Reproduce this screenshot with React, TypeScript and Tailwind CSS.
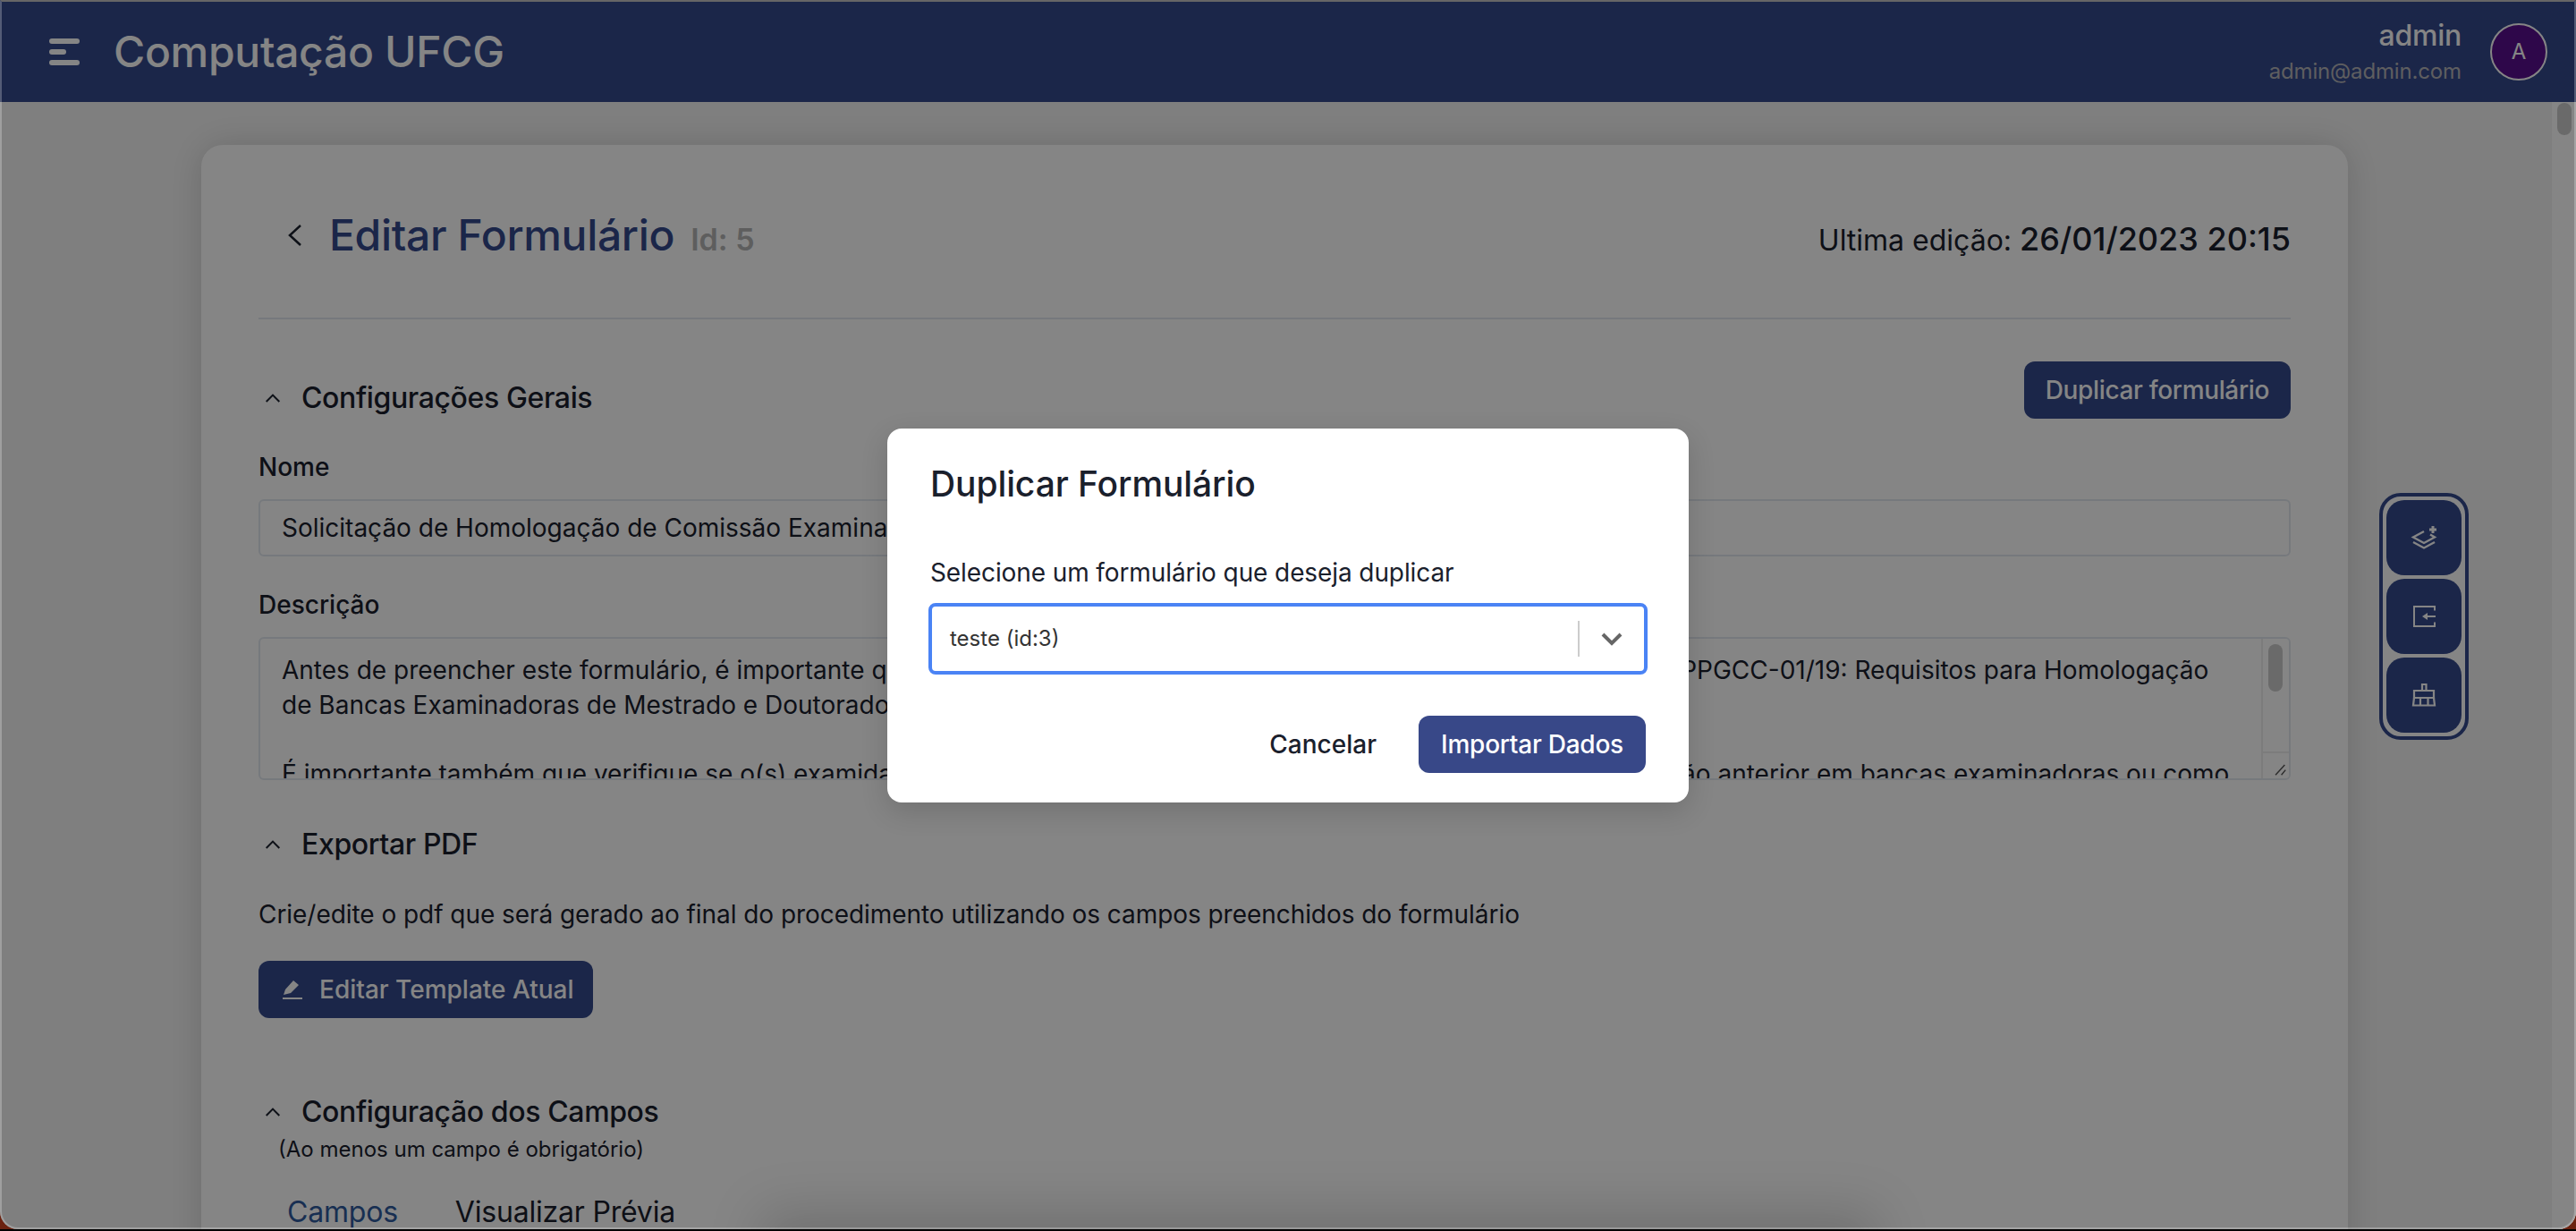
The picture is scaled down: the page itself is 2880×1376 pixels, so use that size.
import React from 'react';

const inter = "font-['Inter','Liberation_Sans',sans-serif]";

const Caret: React.FC = () => (
  <svg viewBox="0 0 16 10" className="w-4 h-2.5 shrink-0" fill="none" stroke="currentColor" strokeWidth="2">
    <path d="M.7 9 8 1.6 15.3 9" />
  </svg>
);

const SectionTitle: React.FC<{ children: React.ReactNode }> = ({ children }) => (
  <div className="flex items-center gap-6 pl-2 text-[#1a202c]">
    <Caret />
    <h2 className="text-[32px] leading-10 font-medium tracking-[-0.37px]">{children}</h2>
  </div>
);

const PanelButton: React.FC<{ children: React.ReactNode }> = ({ children }) => (
  <button className="w-[84px] h-[84px] rounded-[20px] bg-[#34498d] text-white flex items-center justify-center">
    {children}
  </button>
);

const App: React.FC = () => {
  return (
    <div className={`${inter} relative w-[2880px] h-[1376px] overflow-hidden bg-[#6b2210] border-b-2 border-black`}>
      <div className="relative h-[1374px] flex flex-col overflow-hidden rounded-b-[20px] bg-[#f4f4f4]">
        {/* Header */}
        <header className="h-[114px] pt-0.5 shrink-0 bg-[#34498d] flex items-center justify-between pl-[55px] pr-8 text-white">
          <div className="flex items-center gap-[38px]">
            <svg viewBox="0 0 34 30" className="w-[34px] h-[30px]" fill="white">
              <rect x="0" y="0" width="34" height="6" rx="3" />
              <rect x="0" y="12" width="19" height="6" rx="3" />
              <rect x="0" y="24" width="34" height="6" rx="3" />
            </svg>
            <span className="text-[48px] leading-[60px] font-medium tracking-[-0.3px]">Computação UFCG</span>
          </div>
          <div className="flex items-center gap-8">
            <div className="flex flex-col items-end">
              <span className="text-[32px] leading-10 font-medium tracking-[-0.25px]">admin</span>
              <span className="text-2xl leading-8 mt-1 text-[#b4b4b8] tracking-[-0.15px]">admin@admin.com</span>
            </div>
            <div className="w-16 h-16 rounded-full bg-[#590f8f] border-2 border-white flex items-center justify-center text-2xl">A</div>
          </div>
        </header>

        {/* Content */}
        <main className="relative flex-1 overflow-hidden">
          <div className="w-[2400px] ml-[225px] mt-12 bg-white rounded-3xl shadow-[0_0_40px_rgba(0,0,0,0.15)] px-16 h-[1400px] text-[#1a202c]">
            <div className="flex items-center justify-between h-[195px] border-b-2 border-[#e2e8f0] pt-[9px]">
              <div className="flex items-center pl-8">
                <svg viewBox="0 0 17 26" className="w-[17px] h-[26px] mr-[30px]" fill="none" stroke="#1a202c" strokeWidth="2.5">
                  <path d="M15 2 3 13l12 11" />
                </svg>
                <span className="text-[48px] leading-[60px] font-medium text-[#34498d] tracking-[-0.33px]">Editar Formulário</span>
                <span className="text-[34px] font-semibold text-[#b4b4b4] ml-[18px] mt-2">Id: 5</span>
              </div>
              <p className="text-[32px] mt-2">
                Ultima edição: <strong className="font-medium text-[36px]">26/01/2023 20:15</strong>
              </p>
            </div>

            <div className="flex items-center justify-between mt-[47px]">
              <div className="pt-[17px]"><SectionTitle>Configurações Gerais</SectionTitle></div>
              <button className="h-16 px-6 rounded-xl bg-[#34498d] text-white text-[28px] font-medium tracking-[-0.35px]">Duplicar formulário</button>
            </div>

            <label className="block text-[28px] leading-10 font-medium mt-[34px]">Nome</label>
            <div className="mt-4 h-16 border-2 border-[#e2e8f0] rounded-md px-6 flex items-center text-[28px]">
              Solicitação de Homologação de Comissão Examinadora
            </div>

            <label className="block text-[28px] leading-10 font-medium mt-[34px]">Descrição</label>
            <div className="relative mt-4 h-40 border-2 border-[#e2e8f0] rounded-md pl-6 pr-10 pt-4 text-[28px] leading-[38.5px] overflow-hidden whitespace-nowrap">
              <p>Antes de preencher este formulário, é importante que o(a) solicitante leia atentamente o texto da resolução normativa PPGCC-01/19: Requisitos para Homologação</p>
              <p>de Bancas Examinadoras de Mestrado e Doutorado do programa.</p>
              <p className="mt-[38.5px]">É importante também que verifique se o(s) examidador(es) externo(s) selecionados têm de fato alguma real participação anterior em bancas examinadoras ou como</p>
              <div className="absolute right-0 top-0 bottom-0 w-[31px] bg-white border-l-2 border-[#ededed]">
                <div className="w-4 h-[53px] mt-1.5 ml-[6px] rounded-full bg-[#cccccc]" />
                <svg viewBox="0 0 30 30" className="absolute bottom-0 left-0 w-[30px] h-[30px] border-t-2 border-[#ededed]" fill="none" stroke="#555" strokeWidth="1.5">
                  <path d="M14 26 25 14M21 26l5-6" />
                </svg>
              </div>
            </div>

            <div className="mt-[52px]"><SectionTitle>Exportar PDF</SectionTitle></div>
            <p className="text-[28px] leading-10 mt-[38px] tracking-[-0.05px]">Crie/edite o pdf que será gerado ao final do procedimento utilizando os campos preenchidos do formulário</p>
            <button className="mt-8 h-16 w-[374px] rounded-xl bg-[#34498d] text-white text-[28px] font-medium flex items-center pl-[27px] gap-[19px]">
              <svg viewBox="0 0 22 22" className="w-[22px] h-[22px]" fill="white">
                <path d="M1 17 3 11 12 1l6 5-9 9-8 2ZM0 20h22v2H0z" />
              </svg>
              Editar Template Atual
            </button>

            <div className="mt-[85px]"><SectionTitle>Configuração dos Campos</SectionTitle></div>
            <p className="text-2xl leading-8 pl-[22px] mt-1.5">(Ao menos um campo é obrigatório)</p>
            <div className="flex gap-[64px] pl-8 mt-[34px] text-[32px] leading-10 tracking-[-0.2px]">
              <span className="text-[#2f5a9e]">Campos</span>
              <span>Visualizar Prévia</span>
            </div>
          </div>

          {/* Floating actions */}
          <div className="absolute top-[437px] left-[2660px] flex flex-col gap-1 p-1 border-4 border-[#34498d] rounded-3xl bg-white">
            <PanelButton>
              <svg viewBox="0 1 60 60" className="w-[60px] h-[60px]" fill="none" stroke="white" strokeWidth="2.4">
                <path d="M30 24 18 30.5 30 37l12-6.5-5-3" />
                <path d="M18 36l12 6.5L42 36" />
                <path d="M40 18v8M36 22h8" strokeWidth="3" />
              </svg>
            </PanelButton>
            <PanelButton>
              <svg viewBox="0 0 60 60" className="w-[60px] h-[60px]" fill="none" stroke="white" strokeWidth="2">
                <path d="M42 23.5V19H19v22h23v-4.5" />
                <path d="M43 30H32" />
                <path d="M28 30l6-4v8Z" fill="white" stroke="none" />
              </svg>
            </PanelButton>
            <PanelButton>
              <svg viewBox="0 -3 60 60" className="w-[60px] h-[60px]" fill="none" stroke="white" strokeWidth="2.2">
                <path d="M28 22v-7h4.5v7" />
                <path d="M19 31v-9h22v9" />
                <path d="M19 30h22M19 30l-1 8.500h24L41 30M26 31v7M34.500 31v7" />
              </svg>
            </PanelButton>
          </div>

          <div className="absolute left-[870px] top-full w-[1210px] h-10 shadow-[0_0_60px_20px_rgba(0,0,0,0.16)]" />

          {/* Page scrollbar */}
          <div className="absolute right-0 top-0 bottom-0 w-7 bg-white border-l border-black/5">
            <div className="w-4 h-9 ml-[6px] mt-px rounded-full bg-[#cccccc]" />
          </div>
        </main>

        {/* Overlay + modal */}
        <div className="absolute inset-0 bg-black/48 z-10" />
        <div className="absolute top-[479px] left-[992px] z-20 w-[896px] h-[418px] rounded-2xl bg-white shadow-[0_10px_30px_rgba(0,0,0,0.15)] px-12 text-[#1a202c]">
          <h3 className="text-[39px] leading-[44px] font-medium mt-10 tracking-[-0.1px]">Duplicar Formulário</h3>
          <p className="text-[28px] leading-10 mt-[57px] tracking-[-0.1px]">Selecione um formulário que deseja duplicar</p>
          <div className="mt-[14px] -mx-[2px] h-20 rounded-lg border-4 border-[#4a83f5] flex items-center pl-5 pr-6 text-2xl text-[#333]">
            <span className="flex-1">teste (id:3)</span>
            <span className="w-0.5 h-10 bg-[#ccc]" />
            <svg viewBox="0 0 24 16" className="w-6 h-4 ml-6" fill="none" stroke="#666" strokeWidth="4">
              <path d="M2 3l10 10L22 3" />
            </svg>
          </div>
          <div className="flex items-center justify-end gap-[47px] mt-[46px]">
            <button className="text-[28px] font-medium">Cancelar</button>
            <button className="w-[254px] h-16 rounded-xl bg-[#384888] text-white text-[28px] font-medium tracking-[-0.25px]">Importar Dados</button>
          </div>
        </div>

        {/* Window edge */}
        <div className="absolute inset-0 z-30 rounded-b-[20px] border-2 border-white/25 border-t-[#666] pointer-events-none" />
      </div>
    </div>
  );
};

export default App;
